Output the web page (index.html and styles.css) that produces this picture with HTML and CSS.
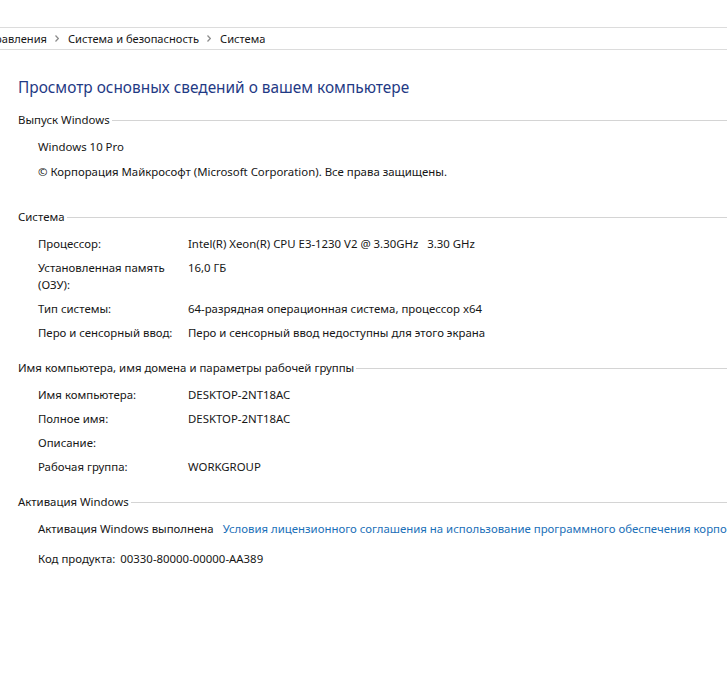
FILE: index.html
```html
<!DOCTYPE html>
<html lang="ru">
<head>
    <meta charset="UTF-8">
    <title>Система</title>
    <link rel="stylesheet" href="styles.css">
</head>
<body>

<div class="address">
    <span class="crumb first">Панель управления</span>
    <svg class="chev" width="4" height="7" viewBox="0 0 4 7"><polyline points="0.5,0.5 3.3,3.5 0.5,6.5" fill="none" stroke="#8c8c8c" stroke-width="1.2"/></svg>
    <span class="crumb">Система и безопасность</span>
    <svg class="chev" width="4" height="7" viewBox="0 0 4 7"><polyline points="0.5,0.5 3.3,3.5 0.5,6.5" fill="none" stroke="#8c8c8c" stroke-width="1.2"/></svg>
    <span class="crumb">Система</span>
</div>

<div class="page">
    <h1 class="title">Просмотр основных сведений о вашем компьютере</h1>

    <div class="section first-section">
        <div class="section-head"><span>Выпуск Windows</span></div>
        <div class="line">Windows 10 Pro</div>
        <div class="line">© Корпорация Майкрософт (Microsoft Corporation). Все права защищены.</div>
    </div>

    <div class="section">
        <div class="section-head"><span>Система</span></div>
        <div class="row"><div class="label">Процессор:</div><div class="value">Intel(R) Xeon(R) CPU E3-1230 V2 @ 3.30GHz &nbsp; 3.30 GHz</div></div>
        <div class="row"><div class="label">Установленная память (ОЗУ):</div><div class="value">16,0 ГБ</div></div>
        <div class="row"><div class="label">Тип системы:</div><div class="value">64-разрядная операционная система, процессор x64</div></div>
        <div class="row"><div class="label">Перо и сенсорный ввод:</div><div class="value">Перо и сенсорный ввод недоступны для этого экрана</div></div>
    </div>

    <div class="section">
        <div class="section-head"><span>Имя компьютера, имя домена и параметры рабочей группы</span></div>
        <div class="row"><div class="label">Имя компьютера:</div><div class="value">DESKTOP-2NT18AC</div></div>
        <div class="row"><div class="label">Полное имя:</div><div class="value">DESKTOP-2NT18AC</div></div>
        <div class="row"><div class="label">Описание:</div><div class="value"></div></div>
        <div class="row"><div class="label">Рабочая группа:</div><div class="value">WORKGROUP</div></div>
    </div>

    <div class="section">
        <div class="section-head"><span>Активация Windows</span></div>
        <div class="line nowrap">Активация Windows выполнена <a class="link" href="#">Условия лицензионного соглашения на использование программного обеспечения корпорации Майкрософт</a></div>
        <div class="line key">Код продукта: <span class="key-value">00330-80000-00000-AA389</span></div>
    </div>
</div>

</body>
</html>
```

FILE: styles.css
```css
body {
    margin: 0;
    background: #fff;
    font-family: "Noto Sans", "Open Sans", sans-serif;
    font-size: 11.4px;
    color: #161616;
    overflow: hidden;
}
.address {
    margin-top: 27px;
    height: 21px;
    border-top: 1px solid #dcdcdc;
    border-bottom: 1px solid #dcdcdc;
    display: flex;
    align-items: center;
    white-space: nowrap;
    overflow: hidden;
    font-size: 11.1px;
}
.crumb.first {
    margin-left: -60px;
}
.chev {
    flex-shrink: 0;
    margin: 0 9px 0 8px;
}
.page {
    padding: 0 0 0 18px;
}
.title {
    font-size: 15.4px;
    font-weight: normal;
    color: #1f3a85;
    margin: 27px 0 12px 0;
}
.section {
    margin-bottom: 17px;
}
.first-section {
    margin-bottom: 27px;
}
.section-head {
    display: flex;
    align-items: center;
    height: 18px;
    margin-bottom: 10px;
}
.section-head::after {
    content: "";
    flex: 1;
    border-top: 1px solid #d4d4d4;
    margin-left: 2px;
    margin-top: 3px;
}
.line {
    padding-left: 20px;
    line-height: 17px;
    margin-bottom: 8px;
}
.nowrap {
    white-space: nowrap;
    overflow: hidden;
}
.link {
    color: #1a6fb8;
    text-decoration: none;
    margin-left: 6px;
}
.key {
    margin-top: 13px;
}
.key-value {
    margin-left: 2px;
}
.row {
    display: flex;
    padding-left: 20px;
    line-height: 17px;
    margin-bottom: 7px;
}
.label {
    width: 145px;
    flex-shrink: 0;
    margin-right: 5px;
}
.value {
    white-space: nowrap;
}
```
